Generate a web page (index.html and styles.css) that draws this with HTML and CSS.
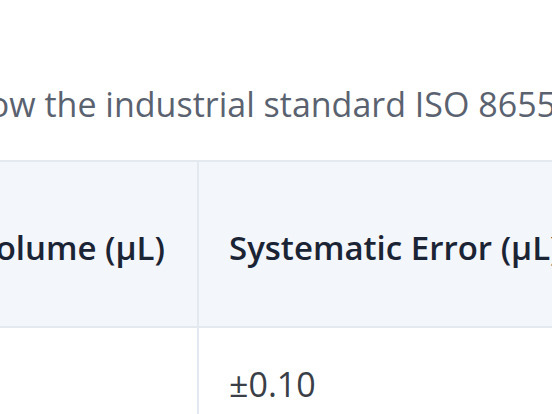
FILE: index.html
```html
<!DOCTYPE html>
<html lang="en">
<head>
    <meta charset="UTF-8">
    <meta name="viewport" content="width=device-width, initial-scale=1.0">
    <title>Pipette Accuracy</title>
    <link rel="stylesheet" href="styles.css">
</head>
<body>
    <div class="page">
        <p class="intro">Pipettes must follow the industrial standard ISO 8655.</p>
        <table class="spec-table">
            <thead>
                <tr>
                    <th class="col-volume">Volume (µL)</th>
                    <th class="col-error">Systematic Error (µL)</th>
                </tr>
            </thead>
            <tbody>
                <tr>
                    <td>10</td>
                    <td>±0.10</td>
                </tr>
            </tbody>
        </table>
    </div>
</body>
</html>
```

FILE: styles.css
```css
html, body { margin: 0; padding: 0; background: #fff; overflow: hidden; }
body { font-family: "Open Sans", "Noto Sans", sans-serif; width: 552px; height: 414px; }
.page { width: 1400px; padding-top: 82px; }
.intro { margin: 0 0 0 -287px; font-size: 34px; line-height: 44px; color: #5a6270; white-space: nowrap; }
.spec-table { border-collapse: collapse; margin: 34px 0 0 -120px; }
.spec-table th, .spec-table td { border: 2px solid #e4e9f0; text-align: left; padding: 0 30px; white-space: nowrap; }
.spec-table th { background: #f3f6fa; height: 158px; font-size: 33px; font-weight: 600; color: #1b2434; padding-top: 6px; }
.spec-table th.col-volume { text-align: right; padding-right: 32px; }
.spec-table td { height: 112px; font-size: 34px; color: #3a3f47; vertical-align: middle; }
.col-volume { width: 253px; }
```
